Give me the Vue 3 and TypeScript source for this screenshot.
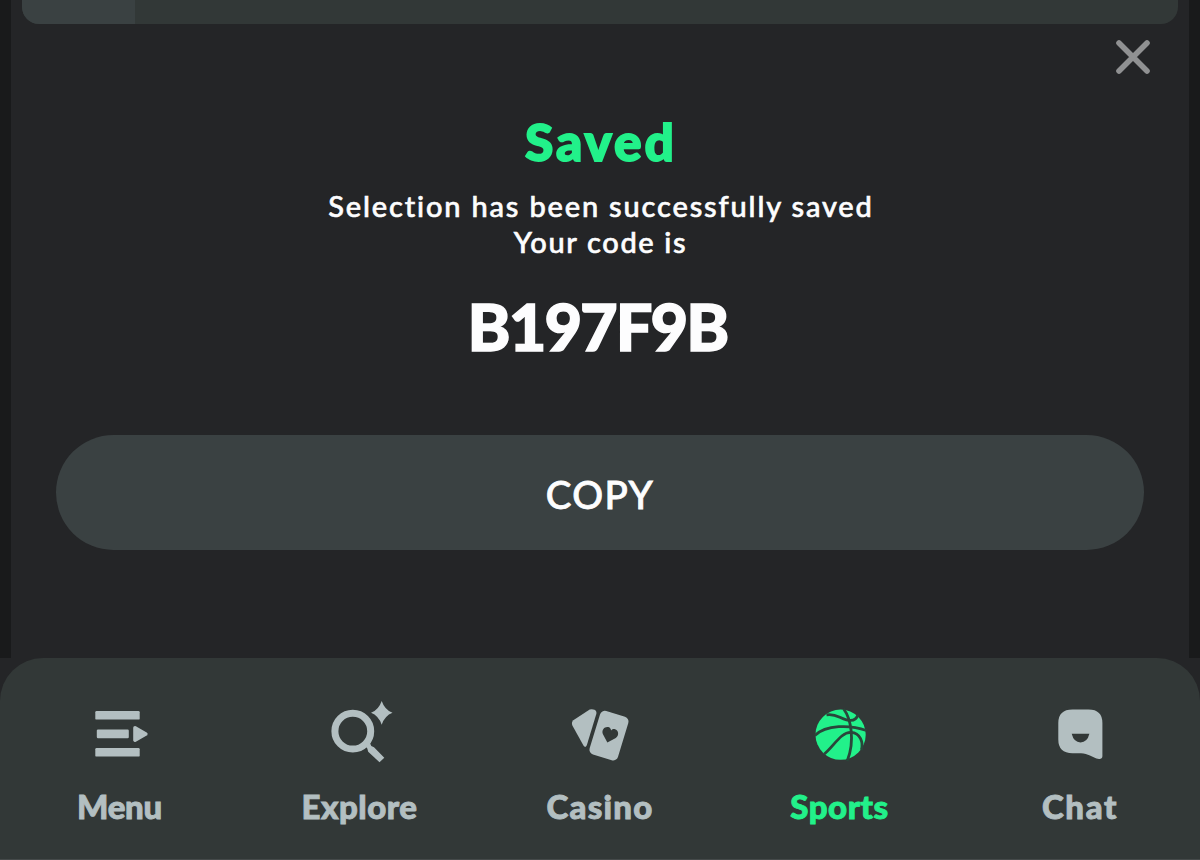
<script setup lang="ts">
interface NavItem {
  id: string
  label: string
  active?: boolean
}

const navItems: NavItem[] = [
  { id: 'menu', label: 'Menu' },
  { id: 'explore', label: 'Explore' },
  { id: 'casino', label: 'Casino' },
  { id: 'sports', label: 'Sports', active: true },
  { id: 'chat', label: 'Chat' },
]

const code = 'B197F9B'
</script>

<template>
  <div class="screen">
    <main class="sheet">
      <div class="tabs">
        <div class="tab"></div>
      </div>
      <button class="close" aria-label="Close">
        <svg width="40" height="40" viewBox="0 0 40 40">
          <path d="M6 6L34 34M34 6L6 34" stroke="#909192" stroke-width="5.6" stroke-linecap="round" />
        </svg>
      </button>
      <h1 class="title"><span>Saved</span></h1>
      <p class="message">
        <span class="first">Selection has been successfully saved</span>
        <span class="second">Your code is</span>
      </p>
      <div class="code"><span>{{ code }}</span></div>
      <button class="copy"><span>COPY</span></button>
    </main>

    <nav class="nav">
      <a v-for="item in navItems" :key="item.id" class="item" :class="[item.id, { active: item.active }]">
        <svg class="icon" width="100" height="85" viewBox="0 0 100 85">
          <g v-if="item.id === 'menu'" fill="currentColor">
            <rect x="25.3" y="21" width="44.4" height="8.6" rx="1.2" />
            <rect x="26.8" y="39.6" width="32" height="8.6" rx="1.2" />
            <rect x="25.3" y="58" width="44.4" height="8.6" rx="1.2" />
            <path d="M65 37.8L75.8 44L65 50.2Z" stroke="currentColor" stroke-width="3.6" stroke-linejoin="round" />
          </g>
          <g v-else-if="item.id === 'explore'" fill="currentColor">
            <circle cx="42.8" cy="41.2" r="17.9" fill="none" stroke="currentColor" stroke-width="7" />
            <path d="M54 54L59 51L61.3 56L64 57.3L74.3 67.7L69.5 72.3L58.2 61.8L57.3 58.5Z" />
            <path d="M71.7 11Q74.8 20 82.5 22.8Q74.8 25.8 71.7 34.7Q68.6 25.8 61 22.8Q68.6 20 71.7 11Z" />
          </g>
          <g v-else-if="item.id === 'casino'">
            <path
              d="M23.3 30.3L39.7 19.6Q42 18.6 44.5 19.8Q47 21.2 46.3 24L36.8 55.3Q35.3 58.2 33.6 55.8L22.5 35.8Q21 32.5 23.3 30.3Z"
              fill="currentColor"
            />
            <rect
              x="44.2"
              y="23"
              width="29.6"
              height="45.4"
              rx="5"
              fill="currentColor"
              transform="rotate(17 59.2 45.6)"
            />
            <path
              d="M59.5 52.8L52.7 46C49.8 41.7 52.8 37.8 56 37.8C58 37.8 59 39 59.5 40.2C60 39 61 37.8 63 37.8C66.2 37.8 69.2 41.7 66.3 46Z"
              fill="#323837"
              transform="rotate(17 59.5 45.4)"
            />
          </g>
          <g v-else-if="item.id === 'sports'">
            <circle cx="50.6" cy="44.7" r="25.1" fill="currentColor" />
            <g fill="none" stroke="#2a463b" stroke-width="2.8">
              <path d="M53.7 19C60.5 28 65.5 50 57.2 71" />
              <path d="M24.8 45.5C36 34.7 60 34.5 76.5 40.5" />
              <path d="M34.3 64C44 56 51 42 61 42.4C70.5 42.8 73.5 53 71.4 60" />
              <path d="M36.5 24.8C46 23.2 49 28 56.5 29.9C62 31.2 66.5 30 68 24.6" />
            </g>
          </g>
          <g v-else>
            <path
              d="M42.5 19.5H58.5Q72.4 19.5 72.4 33V66.3Q72.2 69.2 69 69C62 67.6 58 63.2 51 63.2H42.5Q28.3 63.2 28.3 49.5V33Q28.3 19.5 42.5 19.5Z"
              fill="currentColor"
            />
            <path d="M41.7 43.8H59.4Q57.3 52.4 50.5 52.4Q43.8 52.4 41.7 43.8Z" fill="#323837" />
          </g>
        </svg>
        <span class="label">{{ item.label }}</span>
      </a>
    </nav>
  </div>
</template>

<style>
body {
  margin: 0;
  background: #242527;
}
</style>

<style scoped>
.screen {
  box-sizing: border-box;
  width: 1200px;
  height: 860px;
  overflow: hidden;
  display: flex;
  flex-direction: column;
  background: #242527;
  color: #fdfdfe;
  font-family: Lato, 'Open Sans', sans-serif;
}

.sheet {
  position: relative;
  box-sizing: border-box;
  height: 658px;
  flex: none;
  display: flex;
  flex-direction: column;
  align-items: center;
  border: solid #191a1b;
  border-width: 0 11px;
}

.tabs {
  width: 1156px;
  height: 23.5px;
  overflow: hidden;
  border-radius: 0 0 17px 17px;
  background: #323837;
}

.tab {
  width: 113px;
  height: 100%;
  background: #3a4142;
}

button {
  border: 0;
  padding: 0;
  font: inherit;
  color: inherit;
}

.close {
  position: absolute;
  top: 37px;
  right: 36px;
  width: 40px;
  height: 40px;
  background: none;
}

.close svg {
  display: block;
}

.title {
  margin: 87.5px 0 0;
  padding-left: 2px;
  font-size: 51.5px;
  line-height: 60px;
  font-weight: 900;
  letter-spacing: 2.9px;
  -webkit-text-stroke: 1.8px currentColor;
  color: #22f18a;
}

.message {
  margin: 17px 0 0;
  display: flex;
  flex-direction: column;
  align-items: center;
  font-size: 29px;
  line-height: 36px;
  font-weight: 500;
  white-space: nowrap;
  -webkit-text-stroke: 0.6px currentColor;
}

.first {
  padding-left: 2px;
  letter-spacing: 1.83px;
}

.second {
  padding-left: 1px;
  letter-spacing: 1.65px;
}

.code {
  margin-top: 28px;
  padding-right: 5px;
  font-size: 65px;
  line-height: 76px;
  font-weight: 900;
  letter-spacing: -2px;
  -webkit-text-stroke: 1.4px currentColor;
}

.copy {
  margin-top: 71px;
  width: 1088px;
  height: 115px;
  flex: none;
  border-radius: 58px;
  background: #3a4142;
  font-size: 38.5px;
  line-height: 118px;
  font-weight: 500;
  letter-spacing: 1.4px;
  -webkit-text-stroke: 0.8px currentColor;
}

.nav {
  box-sizing: border-box;
  height: 202px;
  display: grid;
  grid-template-columns: repeat(5, 240px);
  padding-top: 32px;
  border-radius: 43px 43px 0 0;
  border-bottom: 1px solid #454a4a;
  background: #323837;
}

.item {
  display: flex;
  flex-direction: column;
  align-items: center;
  color: #b3bfc1;
}

.item.active {
  color: #22f18a;
}

.icon {
  display: block;
}

.label {
  margin: 11px 1px 0 0;
  font-size: 33px;
  line-height: 40px;
  font-weight: 900;
  letter-spacing: 0.5px;
  -webkit-text-stroke: 0.9px currentColor;
}

.menu .label {
  letter-spacing: -0.3px;
}

.casino .label {
  margin-right: 0;
  letter-spacing: 1.2px;
}

.chat .label {
  margin-right: 0;
  letter-spacing: 1.6px;
}
</style>
